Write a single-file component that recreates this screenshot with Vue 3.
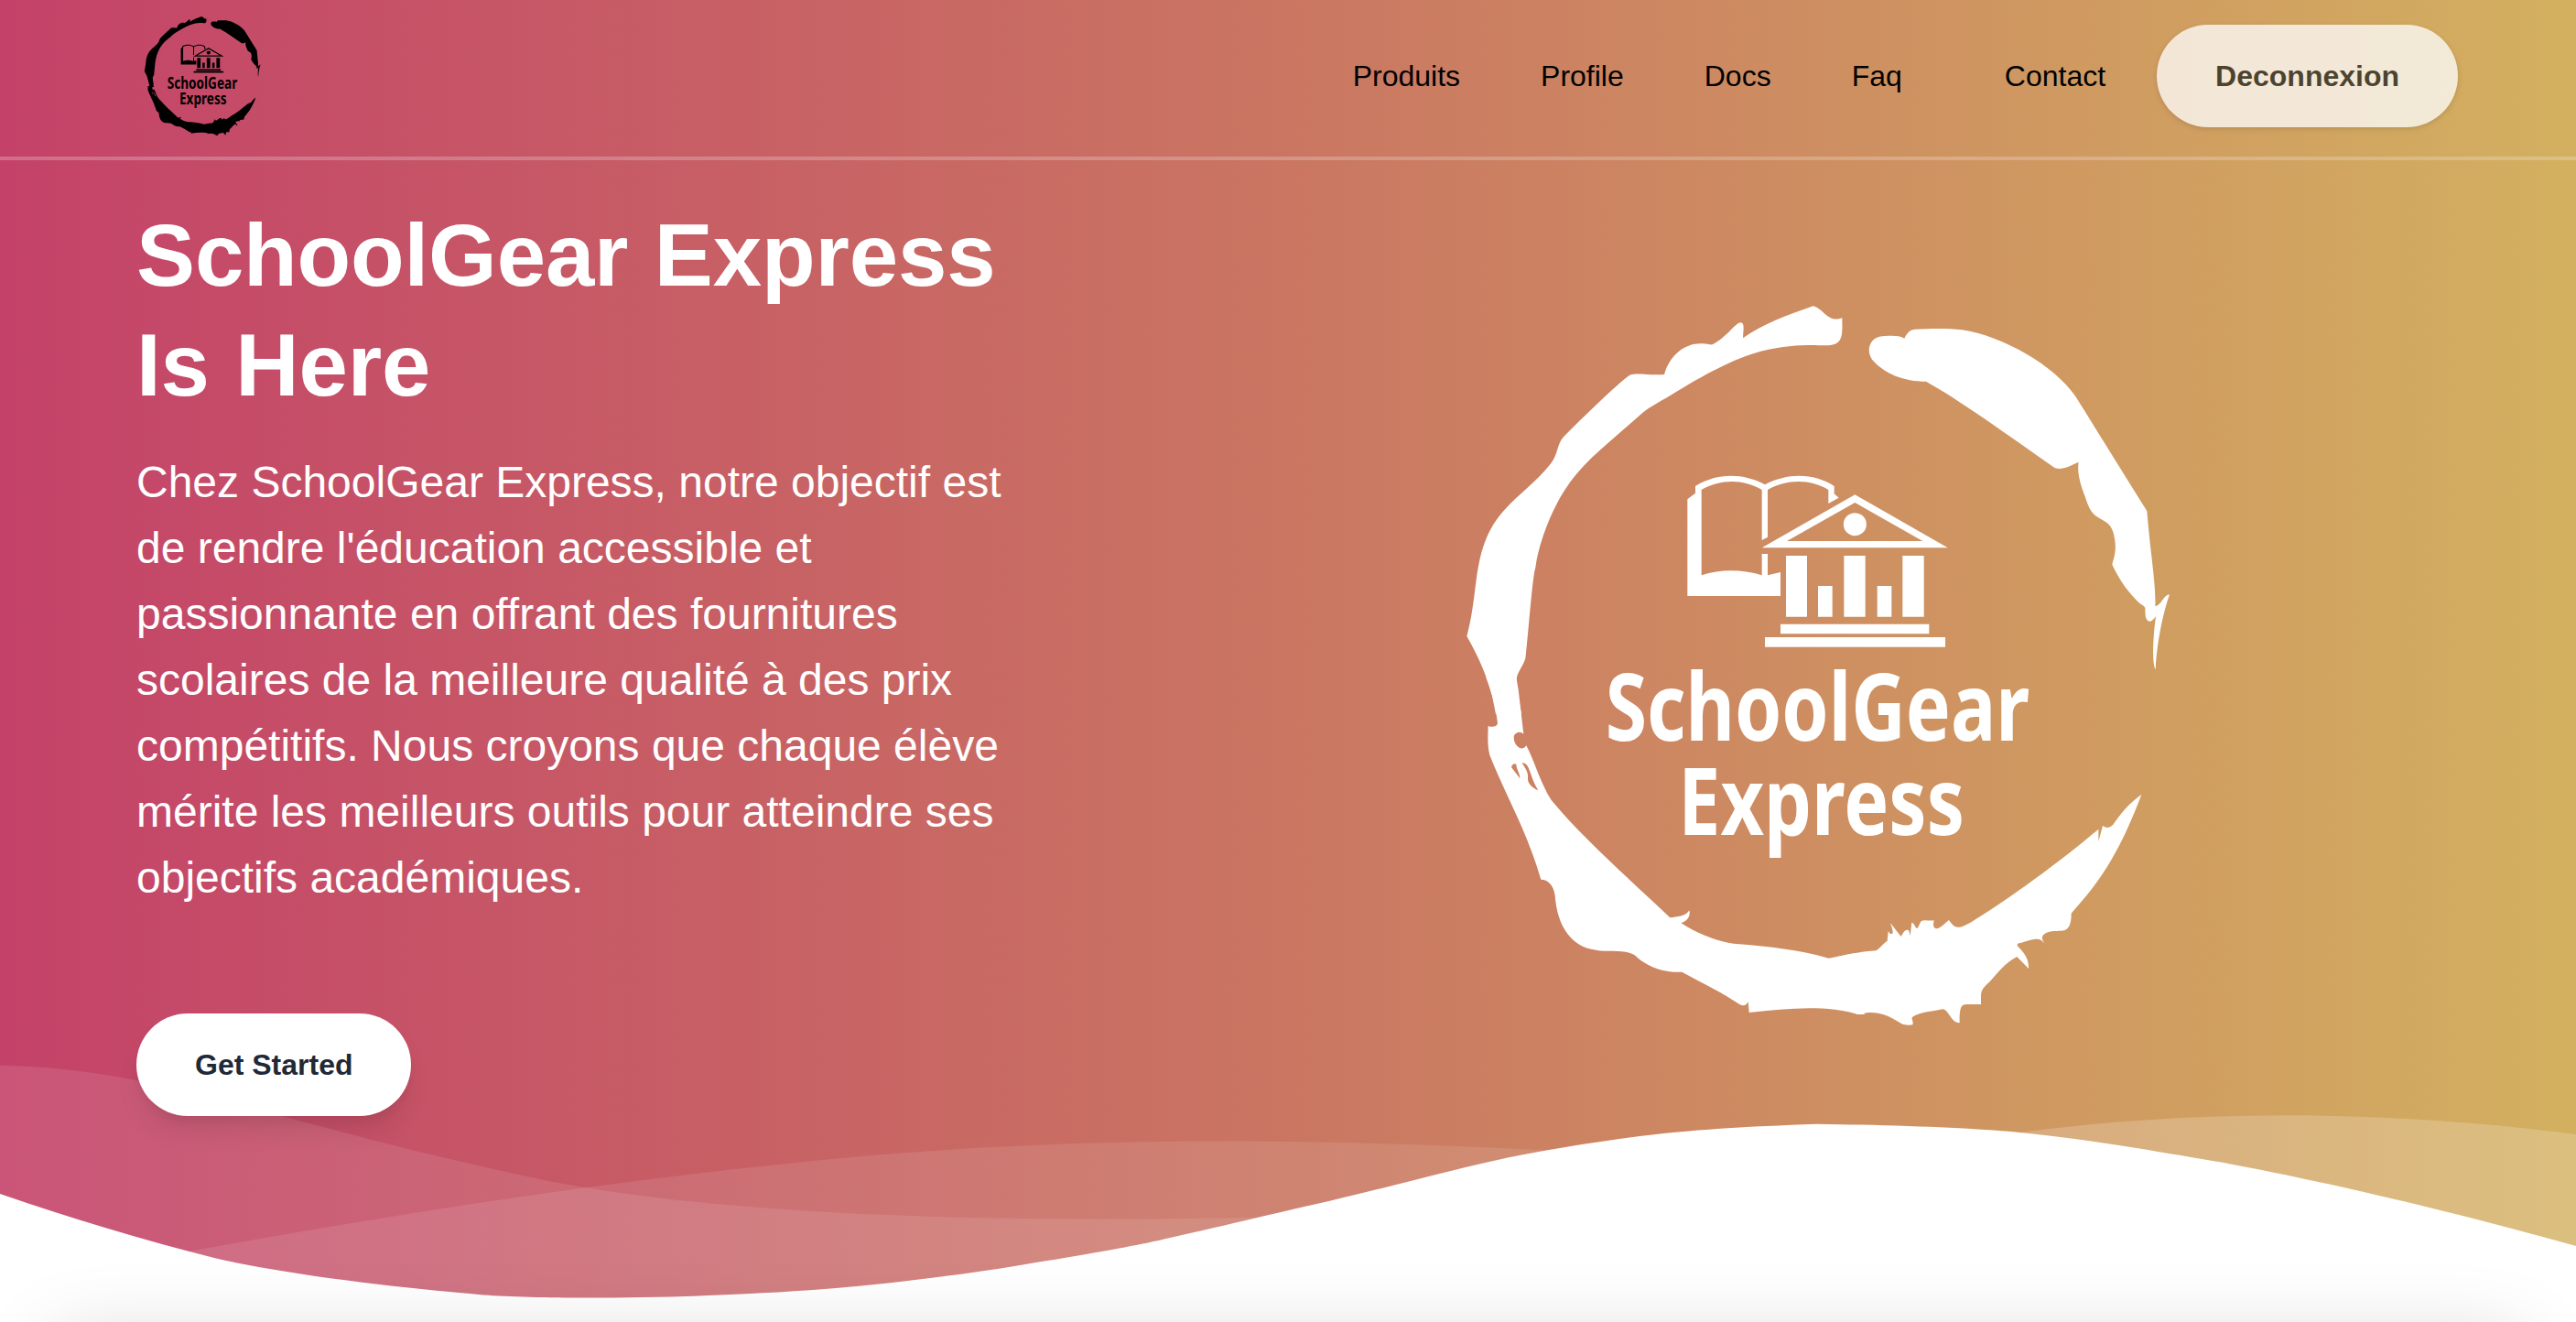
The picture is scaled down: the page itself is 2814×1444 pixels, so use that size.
<script setup>
const links = ['Produits', 'Profile', 'Docs', 'Faq', 'Contact']
</script>

<template>
  <div class="page">
    <svg class="defs" aria-hidden="true">
      <symbol id="brand-mark" viewBox="0 0 2460 2490">
        <!-- brush ring, upper left -->
        <path d="M1297 112C1275 119 1263 117 1240 98C1222 81 1213 76 1202 73C1110 106 1042 129 972 178C973 150 978 130 966 127C948 125 920 176 872 199C862 200 855 196 835 196C780 195 732 235 714 297C670 300 622 291 604 298C588 305 490 395 384 502C362 525 366 560 343 588C300 645 240 685 187 745C120 820 108 905 98 970C88 1050 82 1100 67 1155C95 1205 125 1260 150 1350L162 1410L246 1410L235 1350C233 1320 229 1310 230 1295C232 1270 258 1245 260 1220C272 1110 282 960 292 930C300 870 325 790 365 715C430 595 500 550 640 425C670 400 700 386 730 368C850 294 940 246 1030 221C1140 195 1210 202 1240 202C1302 203 1298 170 1297 112Z"/>
        <!-- brush ring, right -->
        <path transform="translate(1260 0)" d="M241 179C248 163 258 151 274 149C320 148 380 145 430 151C560 170 730 265 802 369C870 478 955 615 1036 745C1048 890 1066 985 1063 1057C1085 1052 1088 1022 1110 1018C1092 1070 1070 1160 1064 1264C1050 1240 1058 1140 1065 1090C1058 1098 1053 1107 1043 1106C1028 1100 1031 1080 1030 1062C1026 1052 1015 1052 1005 1040C965 1000 942 962 922 920C928 895 934 885 932 850C925 765 885 785 855 747C843 730 838 712 833 697C815 650 807 615 812 584C790 592 765 612 735 604C580 495 420 380 312 320C240 320 175 295 135 248C115 218 127 180 160 173C180 171 222 166 241 179Z"/>
        <!-- brush ring, lower left -->
        <path transform="translate(0 1290)" fill-rule="evenodd" d="M130 0C150 50 162 100 168 150C166 162 150 164 137 159C136 190 134 225 142 254C176 340 212 408 248 492C272 549 293 603 310 662C332 662 352 680 356 715C364 822 415 885 490 893C530 902 590 888 620 912C635 928 690 970 772 965C850 1008 905 1032 962 1072C974 1078 984 1074 989 1062L992 1098C1120 1083 1250 1073 1350 1104H1370V901C1320 904 1285 915 1253 920C1150 892 1060 882 960 874C900 870 825 842 769 804C785 801 802 785 796 763C785 783 755 784 733 787C600 660 450 530 344 402C310 350 290 278 262 223C256 232 250 233 242 232C225 224 219 205 222 190C230 176 245 176 253 186L236 40L229 0ZM213 294C216 282 226 280 229 286C230 302 242 315 241 331ZM248 280C274 278 272 322 301 370C285 363 266 350 267 330C269 308 258 298 248 280Z"/>
        <!-- brush ring, lower right -->
        <path transform="translate(1260 1290)" d="M40 911V1091C60 1095 75 1099 90 1104C140 1090 180 1100 232 1135C245 1140 258 1140 268 1138C272 1125 262 1119 267 1113C290 1097 340 1093 366 1087C388 1088 392 1132 422 1132C421 1068 432 1072 450 1071H492V1040C494 1015 508 1012 530 986C562 951 577 932 610 915L648 954C650 923 632 900 614 883C607 873 612 871 625 869C680 850 686 856 700 871C692 860 690 850 697 843C718 825 748 834 765 829C784 822 788 800 788 773C850 700 930 620 1018 383C960 427 946 455 925 482C910 497 900 492 891 486L877 537V497C720 630 560 740 460 802C420 825 407 825 387 795C370 808 356 826 343 822C335 820 335 808 338 796C320 798 305 793 297 798C290 805 288 820 283 822C277 822 274 804 265 803L260 847C258 835 255 825 250 827C240 828 235 840 230 849L194 803C202 822 206 838 200 840C195 842 190 836 188 831L185 863C170 872 160 889 148 895C110 899 75 901 40 911Z"/>
        <!-- book and building -->
        <g transform="translate(480 570)">
          <path d="M336 93C405 50 490 48 564 88C640 48 725 50 791 93V118L806 131L772 150V105C710 68 635 71 573 105V260L554 270V105C490 69 420 70 356 105V385C422 364 488 366 554 385V315H573V385L615 375V453H310V136L336 116Z"/>
          <path fill-rule="evenodd" d="M554 295L859 121L1163 295ZM636 273H1081L859 147Z"/>
          <circle cx="859" cy="218" r="37.5"/>
          <path d="M633 321H702V521H633ZM738 420H785V521H738ZM823 321H893V521H823ZM932 420H979V521H932ZM1015 321H1085V521H1015ZM615 545H1102V577H615ZM564 588H1155V620H564Z"/>
        </g>
      </symbol>
    </svg>

    <header class="header">
      <svg class="logo logo-small" viewBox="0 0 2460 2490">
        <use href="#brand-mark" width="2460" height="2490" />
        <text x="521" y="1497" textLength="1390" lengthAdjust="spacingAndGlyphs">SchoolGear</text>
        <text x="760" y="1805" textLength="938" lengthAdjust="spacingAndGlyphs">Express</text>
      </svg>
      <nav class="nav">
        <a v-for="l in links" :key="l" class="link" href="#">{{ l }}</a>
        <button class="btn btn-out">Deconnexion</button>
      </nav>
    </header>

    <main class="hero">
      <section class="copy">
        <h1>SchoolGear Express Is Here</h1>
        <p>
          Chez SchoolGear Express, notre objectif est de rendre l'éducation accessible et
          passionnante en offrant des fournitures scolaires de la meilleure qualité à des prix
          compétitifs. Nous croyons que chaque élève mérite les meilleurs outils pour atteindre ses
          objectifs académiques.
        </p>
        <button class="btn btn-start">Get Started</button>
      </section>
      <svg class="logo logo-big" viewBox="0 0 2460 2490">
        <use href="#brand-mark" width="2460" height="2490" />
        <text x="521" y="1497" textLength="1390" lengthAdjust="spacingAndGlyphs">SchoolGear</text>
        <text x="760" y="1805" textLength="938" lengthAdjust="spacingAndGlyphs">Express</text>
      </svg>
    </main>

    <div class="bottom">
      <svg class="waves" viewBox="0 0 1428 174">
        <g transform="translate(-2 44)" fill="#fff">
          <path opacity=".1" d="M0,0 C88,0.93 147.9,30 291.9,61 C387.9,82.3 543.6,89.3 759,82.7 C469.336065,156.254352 216.336065,153.6679 0,74.9732496" />
          <path opacity=".1" d="M100,104.3 C277.413333,71.9 426.147877,52.5246657 546.203633,45.5787101 C666.259389,38.6327546 810.524845,41.7979068 979,55.0741668 C931.069965,56.122511 810.303266,74.8455141 616.699903,111.243176 C423.096539,147.640838 250.863238,145.462612 100,104.708498 Z" />
          <path opacity=".2" d="M1046,51.65 C1130.8,30 1279.1,16.8 1439,39.5 L1439,120 C1271.17211,77.9435312 1140.17211,55.1609071 1046,51.6521276 Z" />
        </g>
        <g transform="translate(-4 76)" fill="#fff">
          <path d="M0.457,38 C40,51.6 82,64.6 123.8,75 C165,84.2 222,90.8 272,95.2 C311.4,98 396.6,97 461,92 C486.76,90.01 518.727,86.372 556.926,80.752 C595.747,74.596 622.372,70.008 636.799,66.991 C663.913,61.324 712.501,49.503 727.605,46.128 C780.47,34.317 818.839,22.532 856.324,15.904 C922.689,4.169 955.676,2.522 1011.185,0.432 C1060.705,1.2 1097.39,2.8 1121.236,4.9 C1161.7,8.7 1208.6,17.2 1235.4,21.7 C1285.9,31 1354.4,46.4 1440.9,70.5 L1441.191,104.352 L1.121,104.031 Z" />
        </g>
      </svg>
      <div class="floor"></div>
      <div class="next-shadow"></div>
    </div>
  </div>
</template>

<style>
body {
  margin: 0;
}
</style>

<style scoped>
.page {
  position: relative;
  height: 1444px;
  overflow: hidden;
  display: flex;
  flex-direction: column;
  background: linear-gradient(90deg, #c44269 0%, #ca7662 50%, #d3b060 100%);
  font-family: 'Liberation Sans', Arial, sans-serif;
  font-size: 32px;
  line-height: 48px;
  box-sizing: border-box;
}
.defs {
  position: absolute;
  width: 0;
  height: 0;
}
.header {
  height: 171px;
  flex: none;
  display: flex;
  justify-content: space-between;
  align-items: flex-start;
  padding: 0 129px 0 153.5px;
  border-bottom: 4px solid rgba(243, 244, 246, 0.25);
}
.logo {
  display: block;
  flex: none;
}
.logo text {
  font-family: 'Noto Sans', sans-serif;
  font-weight: 700;
  font-size: 308px;
}
.logo-small {
  width: 135.6px;
  height: 137.3px;
  margin-top: 13.7px;
  fill: #000;
}
.nav {
  display: flex;
  align-items: center;
  margin-top: 27px;
}
.link {
  color: #000;
  text-decoration: none;
  padding: 0 32px;
  margin-right: 24px;
}
.link:nth-child(4) {
  margin-right: 48px;
}
.btn {
  font: bold 32px/48px 'Liberation Sans', Arial, sans-serif;
  border: 0;
  border-radius: 56px;
  padding: 32px 64px;
  background: #fff;
  color: #1f2937;
}
.btn-out {
  opacity: 0.75;
  color: #1f2420;
  box-shadow: 0 2px 6px rgba(0, 0, 0, 0.1), 0 2px 4px rgba(0, 0, 0, 0.06);
}
.btn-start {
  box-shadow: 0 20px 30px -6px rgba(0, 0, 0, 0.1), 0 8px 12px -4px rgba(0, 0, 0, 0.05);
}
.hero {
  flex: none;
  height: 902px;
  display: flex;
  align-items: flex-start;
  padding-left: 149px;
}
.copy {
  position: relative;
  z-index: 1;
  width: 976px;
  color: #fff;
}
h1 {
  margin: 44px 0 32px;
  font-size: 96px;
  line-height: 120px;
  font-weight: bold;
  letter-spacing: -0.15px;
  word-spacing: 2px;
}
p {
  margin: 0 0 112px;
  font-size: 48px;
  line-height: 72px;
}
.logo-big {
  width: 820px;
  height: 830px;
  margin: 135px 0 0 455px;
  fill: #fff;
}
.bottom {
  position: relative;
  flex: 1;
  display: flex;
  flex-direction: column;
}
.waves {
  display: block;
  flex: none;
  width: 2814px;
  height: 343px;
}
.floor {
  flex: 1;
  background: #fff;
  margin-top: -2px;
}
.next-shadow {
  position: absolute;
  left: 62px;
  right: 62px;
  top: 387px;
  height: 400px;
  box-shadow: 0 0 80px rgba(0, 0, 0, 0.17);
}
</style>
